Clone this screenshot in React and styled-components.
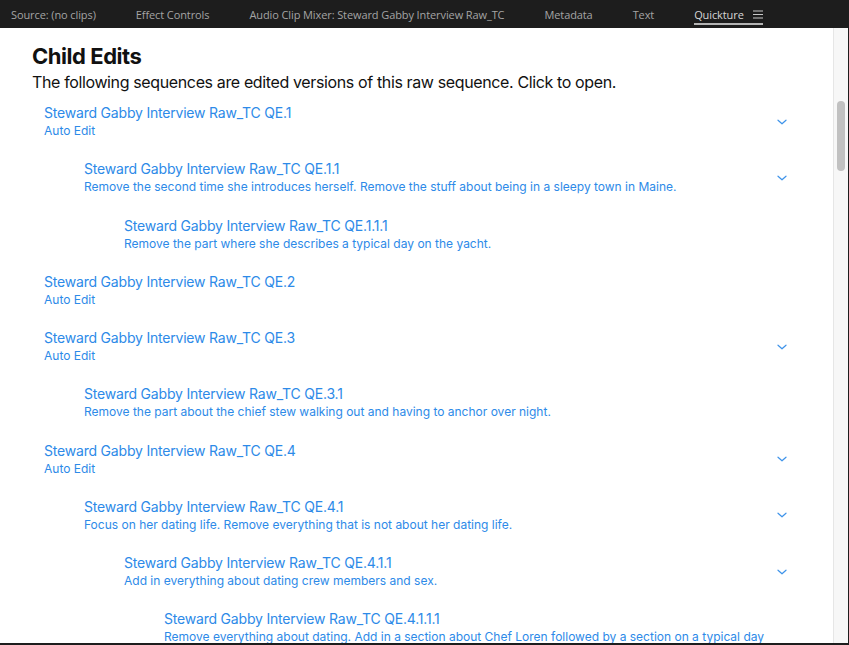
import React from "react";
import styled, { createGlobalStyle } from "styled-components";

const GlobalStyle = createGlobalStyle`
  html, body {
    margin: 0;
    padding: 0;
    background: #1d1d1d;
  }
  * { box-sizing: border-box; }
`;

const edits = [
  {
    name: "Steward Gabby Interview Raw_TC QE.1",
    note: "Auto Edit",
    children: [
      {
        name: "Steward Gabby Interview Raw_TC QE.1.1",
        note: "Remove the second time she introduces herself. Remove the stuff about being in a sleepy town in Maine.",
        children: [
          {
            name: "Steward Gabby Interview Raw_TC QE.1.1.1",
            note: "Remove the part where she describes a typical day on the yacht.",
          },
        ],
      },
    ],
  },
  { name: "Steward Gabby Interview Raw_TC QE.2", note: "Auto Edit" },
  {
    name: "Steward Gabby Interview Raw_TC QE.3",
    note: "Auto Edit",
    children: [
      {
        name: "Steward Gabby Interview Raw_TC QE.3.1",
        note: "Remove the part about the chief stew walking out and having to anchor over night.",
      },
    ],
  },
  {
    name: "Steward Gabby Interview Raw_TC QE.4",
    note: "Auto Edit",
    children: [
      {
        name: "Steward Gabby Interview Raw_TC QE.4.1",
        note: "Focus on her dating life. Remove everything that is not about her dating life.",
        children: [
          {
            name: "Steward Gabby Interview Raw_TC QE.4.1.1",
            note: "Add in everything about dating crew members and sex.",
            children: [
              {
                name: "Steward Gabby Interview Raw_TC QE.4.1.1.1",
                note: "Remove everything about dating. Add in a section about Chef Loren followed by a section on a typical day at sea.",
              },
            ],
          },
        ],
      },
    ],
  },
];

const tabs = [
  "Source: (no clips)",
  "Effect Controls",
  "Audio Clip Mixer: Steward Gabby Interview Raw_TC",
  "Metadata",
  "Text",
  "Quickture",
];

const Chevron = () => (
  <svg width="10" height="6" viewBox="0 0 10 6" fill="none">
    <path d="M1 1.2l4 3.6 4-3.6" stroke="#3d93ea" strokeWidth="1.2" strokeLinecap="round" strokeLinejoin="round" />
  </svg>
);

const Hamburger = () => (
  <svg width="10" height="9" viewBox="0 0 10 9">
    <path d="M0 1h10M0 4.5h10M0 8h10" stroke="#c8c8c8" strokeWidth="1.1" />
  </svg>
);

const EditItem = ({ item, level }) => (
  <>
    <Row>
      <Info level={level}>
        <Name>{item.name}</Name>
        <Note>{item.note}</Note>
      </Info>
      <Toggle>{item.children && <Chevron />}</Toggle>
    </Row>
    {item.children &&
      item.children.map((child) => (
        <EditItem key={child.name} item={child} level={level + 1} />
      ))}
  </>
);

const App = () => {
  return (
    <Frame>
      <GlobalStyle />
      <TabBar>
        {tabs.map((t) => (
          <Tab key={t} active={t === "Quickture"}>
            {t}
            {t === "Quickture" && <Hamburger />}
          </Tab>
        ))}
      </TabBar>
      <Panel>
        <Content>
          <Title>Child Edits</Title>
          <Intro>The following sequences are edited versions of this raw sequence. Click to open.</Intro>
          <List>
            {edits.map((e) => (
              <EditItem key={e.name} item={e} level={0} />
            ))}
          </List>
        </Content>
        <Track>
          <Thumb />
        </Track>
      </Panel>
    </Frame>
  );
};

const Frame = styled.div`
  width: 849px;
  height: 645px;
  display: flex;
  flex-direction: column;
  background: #1d1d1d;
  padding: 0 1px 2px 0;
  overflow: hidden;
`;

const TabBar = styled.div`
  height: 28px;
  flex-shrink: 0;
  display: flex;
  align-items: stretch;
  gap: 40px;
  padding-left: 11px;
  background: #1d1d1d;
  font-family: "Open Sans", "Noto Sans", sans-serif;
  font-size: 11px;
  letter-spacing: -0.1px;
`;

const Tab = styled.div`
  display: flex;
  align-items: center;
  gap: 9px;
  padding-top: 5px;
  color: ${(p) => (p.active ? "#d6d6d6" : "#a4a4a4")};
  border-bottom: 2px solid ${(p) => (p.active ? "#b4b4b4" : "transparent")};
  margin-bottom: 3px;
  white-space: nowrap;
`;

const Panel = styled.div`
  flex: 1;
  min-height: 0;
  display: flex;
  background: #fff;
  overflow: hidden;
`;

const Content = styled.div`
  flex: 1;
  min-width: 0;
  padding: 14px 0 0 32px;
  font-family: Inter, "Noto Sans", sans-serif;
`;

const Title = styled.h1`
  margin: 0;
  font-size: 22px;
  line-height: 28px;
  font-weight: 700;
  letter-spacing: -0.45px;
  color: #111;
`;

const Intro = styled.p`
  margin: 1px 0 10px;
  font-size: 16px;
  line-height: 22px;
  letter-spacing: -0.37px;
  color: #111;
`;

const List = styled.div`
  display: flex;
  flex-direction: column;
  padding-left: 12px;
`;

const Row = styled.div`
  display: flex;
  align-items: center;
  min-height: 56.25px;
  padding-bottom: 19.25px;
  cursor: pointer;
`;

const Info = styled.div`
  flex: 1;
  min-width: 0;
  padding-left: ${(p) => p.level * 40}px;
  padding-right: 2px;
  color: #2d8ae8;
`;

const Name = styled.div`
  font-size: 14px;
  line-height: 19px;
  letter-spacing: -0.2px;
`;

const Note = styled.div`
  font-size: 12px;
  line-height: 18px;
`;

const Toggle = styled.div`
  width: 24px;
  margin-right: 39px;
  display: flex;
  justify-content: center;
`;

const Track = styled.div`
  width: 15px;
  flex-shrink: 0;
  background: #f7f7f7;
  border-left: 1px solid #e6e6e6;
  padding: 73px 0 0 3px;
`;

const Thumb = styled.div`
  width: 8px;
  height: 70px;
  border-radius: 4px;
  background: #c1c1c1;
`;

export default App;
